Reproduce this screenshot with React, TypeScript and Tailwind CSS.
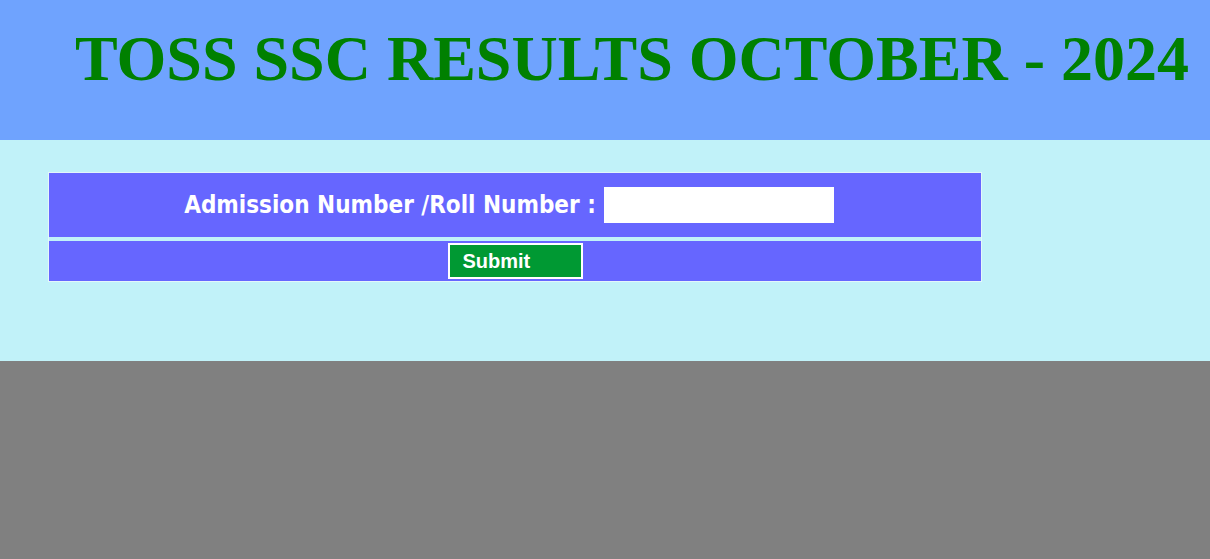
export default function App() {
  return (
    <div className="min-h-[559px] bg-[#808080]">
      <div className="h-[140px] bg-[#6fa3fe] pt-[22px] pl-[75px]">
        <h1 className="whitespace-nowrap text-[64px] font-bold leading-[74px] text-[#008000] [font-family:'Liberation_Serif',serif]">
          TOSS SSC RESULTS OCTOBER - 2024
        </h1>
      </div>
      <div className="h-[221px] bg-[#c1f2f9] pt-[32px] pl-[48px]">
        <div className="flex w-[934px] flex-col gap-[4px] border border-[#e4f6fb]">
          <div className="flex h-[64px] items-center justify-center gap-[8px] bg-[#6666ff] pr-[12px]">
            <span className="text-[24px] font-bold text-white [font-family:'DejaVu_Sans_Condensed','DejaVu_Sans',sans-serif]">
              Admission Number /Roll Number :
            </span>
            <input type="text" className="h-[36px] w-[230px] bg-white outline-none" />
          </div>
          <div className="flex h-[40px] items-center justify-center bg-[#6666ff]">
            <button className="h-[36px] w-[135px] border-2 border-white bg-[#009933] pl-[13px] text-left text-[20px] font-bold text-white [font-family:'Liberation_Sans',Arial,sans-serif]">
              Submit
            </button>
          </div>
        </div>
      </div>
    </div>
  );
}
